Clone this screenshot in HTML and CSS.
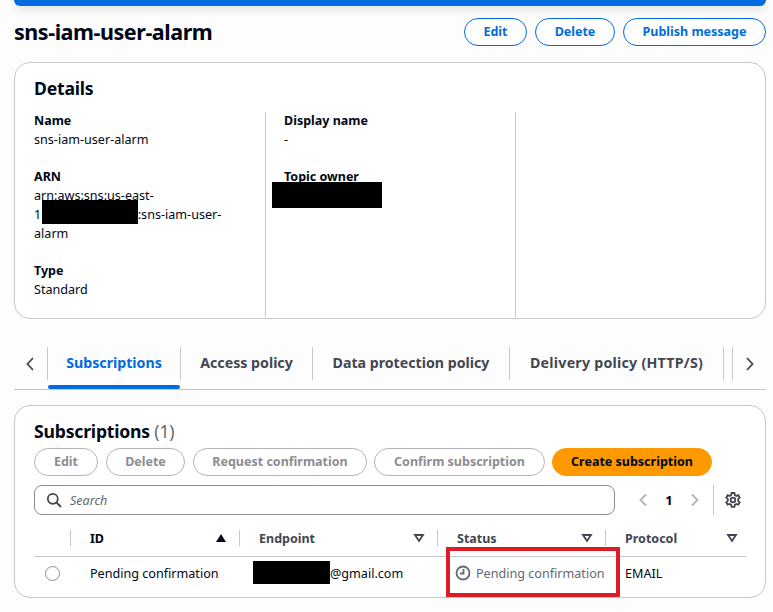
FILE: index.html
```html
<!DOCTYPE html>
<html lang="en">

<head>
  <meta charset="UTF-8">
  <meta name="viewport" content="width=device-width, initial-scale=1.0">
  <title>sns-iam-user-alarm</title>
  <link rel="stylesheet" href="styles.css">
</head>

<body>
  <div class="topbar"></div>

  <header class="page-head">
    <h1>sns-iam-user-alarm</h1>
    <div class="head-actions">
      <button class="btn btn-edit">Edit</button>
      <button class="btn btn-delete">Delete</button>
      <button class="btn btn-publish">Publish message</button>
    </div>
  </header>

  <section class="card details">
    <h2>Details</h2>
    <div class="detail-cols">
      <div class="detail-col">
        <div class="field">
          <div class="label">Name</div>
          <div class="value">sns-iam-user-alarm</div>
        </div>
        <div class="field">
          <div class="label">ARN</div>
          <div class="value arn">arn:aws:sns:us-east-<br>1<span class="gap"></span>:sns-iam-user-<br>alarm
            <div class="redact redact-arn"></div>
          </div>
        </div>
        <div class="field">
          <div class="label">Type</div>
          <div class="value">Standard</div>
        </div>
      </div>
      <div class="detail-col">
        <div class="field">
          <div class="label">Display name</div>
          <div class="value">-</div>
        </div>
        <div class="field owner">
          <div class="label">Topic owner</div>
          <div class="redact redact-owner"></div>
        </div>
      </div>
      <div class="detail-col"></div>
    </div>
  </section>

  <nav class="tabs">
    <button class="tab-arrow">
      <svg width="10" height="16" viewBox="0 0 10 16"><path d="M8 2 2.5 8 8 14" /></svg>
    </button>
    <div class="tab-list">
      <div class="tab tab-active">Subscriptions</div>
      <div class="tab tab-access">Access policy</div>
      <div class="tab tab-data">Data protection policy</div>
      <div class="tab tab-delivery">Delivery policy (HTTP/S)</div>
      <div class="tab tab-clip"></div>
    </div>
    <button class="tab-arrow">
      <svg width="10" height="16" viewBox="0 0 10 16"><path d="M2 2 7.5 8 2 14" /></svg>
    </button>
  </nav>

  <section class="card subs">
    <h2>Subscriptions <span class="count">(1)</span></h2>
    <div class="sub-actions">
      <button class="btn btn-off sub-edit">Edit</button>
      <button class="btn btn-off sub-delete">Delete</button>
      <button class="btn btn-off sub-request">Request confirmation</button>
      <button class="btn btn-off sub-confirm">Confirm subscription</button>
      <button class="btn btn-primary">Create subscription</button>
    </div>

    <div class="filter-row">
      <div class="search">
        <svg width="16" height="16" viewBox="0 0 16 16"><circle cx="6.8" cy="6.8" r="5" /><path d="M10.5 10.5 15 15" /></svg>
        <span>Search</span>
      </div>
      <div class="pager">
        <svg width="10" height="14" viewBox="0 0 10 14"><path d="M8 1.5 2.5 7 8 12.5" /></svg>
        <b>1</b>
        <svg width="10" height="14" viewBox="0 0 10 14"><path d="M2 1.5 7.5 7 2 12.5" /></svg>
      </div>
      <div class="settings">
        <svg width="16" height="16" viewBox="0 0 16 16">
          <path d="M6.6 1h2.8l.4 2 1.5.9 2-.7 1.4 2.4-1.5 1.4v1.900l1.500 1.400-1.400 2.400-2-.7-1.500.9-.4 2H6.600l-.4-2-1.500-.9-2 .7L1.300 10.300l1.500-1.400V7L1.300 5.600l1.400-2.400 2 .7 1.500-.9z" />
          <circle cx="8" cy="8" r="2.300" />
        </svg>
      </div>
    </div>

    <div class="table">
      <div class="row head">
        <div class="cell cell-radio"></div>
        <div class="cell">ID
          <svg class="sort" width="12" height="10" viewBox="0 0 12 10"><path class="solid" d="M6 1 11 9H1z" /></svg>
        </div>
        <div class="cell">Endpoint
          <svg class="sort" width="12" height="10" viewBox="0 0 12 10"><path d="M2 2h8L6 8z" /></svg>
        </div>
        <div class="cell">Status
          <svg class="sort" width="12" height="10" viewBox="0 0 12 10"><path d="M2 2h8L6 8z" /></svg>
        </div>
        <div class="cell">Protocol
          <svg class="sort" width="12" height="10" viewBox="0 0 12 10"><path d="M2 2h8L6 8z" /></svg>
        </div>
      </div>
      <div class="row body">
        <div class="cell cell-radio"><span class="radio"></span></div>
        <div class="cell">Pending confirmation</div>
        <div class="cell endpoint"><div class="redact redact-mail"></div>@gmail.com</div>
        <div class="cell pending">
          <svg width="16" height="16" viewBox="0 0 16 16"><circle cx="8" cy="8" r="6.500" /><path d="M8.500 4v4.500H5" /></svg>
          Pending confirmation
          <div class="red-box"></div>
        </div>
        <div class="cell">EMAIL</div>
      </div>
    </div>
  </section>
</body>

</html>
```

FILE: styles.css
```css
* {
  box-sizing: border-box;
}

body {
  margin: 0;
  height: 612px;
  overflow: hidden;
  padding: 0 7px 0 14px;
  background: #fdfdfd;
  color: #000716;
  font-family: "Noto Sans", "Liberation Sans", sans-serif;
  font-size: 13px;
}

svg {
  fill: none;
  stroke: currentColor;
  stroke-width: 1.800;
  flex: none;
}

.topbar {
  height: 6px;
  background: #006ce0;
  border-radius: 0 0 8px 8px;
  box-shadow: 0 3px 8px rgba(0, 7, 22, 0.15);
}

.page-head {
  height: 56px;
  display: flex;
  align-items: flex-start;
  justify-content: space-between;
  padding-top: 12px;
}

h1 {
  margin: 0;
  font-size: 21.500px;
  line-height: 28px;
  font-weight: 700;
  letter-spacing: -0.45px;
}

h2 {
  margin: 0;
  font-size: 17.600px;
  line-height: 24px;
  font-weight: 700;
  letter-spacing: -0.2px;
}

.head-actions,
.sub-actions {
  display: flex;
  gap: 8px;
}

.btn {
  height: 28px;
  padding: 0 0 2px;
  border: 1.500px solid #006ce0;
  border-radius: 14px;
  background: #fff;
  color: #006ce0;
  font-family: inherit;
  font-size: 12.500px;
  font-weight: 700;
}

.btn-edit { width: 63px; }
.btn-delete { width: 80px; }
.btn-publish { width: 143px; }

.card {
  background: #fff;
  border: 1px solid #c6c6cd;
  border-radius: 16px;
}

.details {
  height: 257px;
  padding: 13px 19px 0;
}

.detail-cols {
  display: grid;
  grid-template-columns: 231px 250px 1fr;
  margin-top: 12px;
  height: 188px;
}

.detail-col + .detail-col {
  border-left: 1px solid #c6c6cd;
  padding-left: 18px;
}

.detail-col:first-child {
  padding-right: 17px;
}

.field {
  margin-bottom: 18px;
  position: relative;
}

.field:first-child {
  margin-top: -1px;
}

.label {
  font-weight: 700;
  line-height: 19px;
  font-size: 12.500px;
}

.value {
  line-height: 19px;
  font-size: 12.600px;
}

.arn {
  position: relative;
}

.gap {
  display: inline-block;
  width: 96.500px;
}

.redact {
  position: absolute;
  background: #000;
}

.redact-arn {
  left: 8px;
  top: 14px;
  width: 96px;
  height: 24px;
}

.redact-owner {
  left: -12px;
  top: 15px;
  width: 110px;
  height: 26px;
}

.redact-mail {
  top: -4px;
  width: 77px;
  height: 23px;
}

.tabs {
  height: 71px;
  margin-bottom: 15px;
  display: flex;
  align-items: flex-start;
  padding-top: 28px;
  border-bottom: 1px solid #c6c6cd;
}

.tab-arrow {
  width: 33px;
  height: 33px;
  padding: 0 0 0 11px;
  border: 0;
  background: none;
  color: #424650;
  display: flex;
  align-items: center;
}

.tab-arrow:last-child {
  padding-left: 12px;
}

.tab-list {
  flex: 1;
  height: 33px;
  display: flex;
  border-left: 1px solid #c6c6cd;
}

.tab {
  height: 33px;
  padding-bottom: 2px;
  display: flex;
  align-items: center;
  justify-content: center;
  border-right: 1px solid #c6c6cd;
  color: #424650;
  font-size: 14.200px;
  font-weight: 700;
}

.tab-active {
  width: 133px;
  color: #006ce0;
  position: relative;
}

.tab-active::after {
  content: "";
  position: absolute;
  left: 0;
  right: 0;
  top: 38px;
  height: 4px;
  background: #006ce0;
  border-radius: 2px;
}

.tab-access { width: 132px; }
.tab-data { width: 197px; }
.tab-delivery { width: 214px; letter-spacing: 0.25px; }
.tab-clip { width: 9px; }

.subs {
  height: 193px;
  padding: 13px 19px 0;
}

.count {
  color: #656871;
  font-weight: 400;
}

.sub-actions {
  margin-top: 5px;
}

.btn-off {
  background: #fff;
  border: 1px solid #b4b4bb;
  color: #8c8c94;
}

.sub-edit { width: 64px; }
.sub-delete { width: 79px; }
.sub-request { width: 174px; }
.sub-confirm { width: 171px; margin-left: -1px; }

.btn-primary {
  width: 160px;
  margin-left: -1px;
  background: #ff9900;
  border-color: #ff9900;
  color: #000716;
}

.filter-row {
  display: flex;
  align-items: center;
  margin-top: 9px;
  height: 30px;
}

.search {
  width: 581px;
  height: 30px;
  display: flex;
  align-items: center;
  gap: 8px;
  padding-left: 11px;
  border: 1px solid #8c8c94;
  border-radius: 8px;
  color: #424650;
}

.search span {
  font-style: italic;
  color: #656871;
  font-size: 12.500px;
}

.pager {
  display: flex;
  align-items: center;
  justify-content: space-between;
  width: 62px;
  margin-left: 23px;
  color: #b4b4bb;
}

.pager b {
  color: #000716;
  font-size: 13px;
}

.settings {
  height: 30px;
  display: flex;
  align-items: center;
  margin-left: 13px;
  padding-left: 11px;
  border-left: 1px solid #c6c6cd;
  color: #424650;
}

.table {
  margin-top: 6px;
  width: 712px;
}

.row {
  display: grid;
  grid-template-columns: 36px 169px 198px 168px 141px;
}

.head {
  height: 36px;
  border-bottom: 1px solid #c6c6cd;
  font-size: 12.500px;
  font-weight: 700;
  color: #424650;
}

.head .cell {
  height: 16px;
  margin-top: 9px;
  display: flex;
  align-items: center;
  justify-content: space-between;
  padding: 0 12px 0 19px;
  border-left: 1px solid #c6c6cd;
}

.head .cell:first-child {
  border-left: 0;
}

.head .cell:last-child {
  padding-right: 8px;
}

.head .cell:nth-child(2) {
  color: #000716;
}

.sort {
  color: #424650;
}

.solid {
  fill: #000716;
  stroke: none;
}

.body {
  height: 32px;
  align-items: center;
  font-size: 12.600px;
}

.body .cell {
  padding-left: 20px;
}

.body .cell-radio {
  padding-left: 11px;
  display: flex;
}

.radio {
  width: 15px;
  height: 15px;
  border: 1px solid #8c8c94;
  border-radius: 50%;
}

.endpoint {
  position: relative;
  padding-left: 91px !important;
  white-space: nowrap;
}

.endpoint .redact {
  left: 14px;
}

.pending {
  position: relative;
  align-self: stretch;
  display: flex;
  align-items: center;
  gap: 5px;
  padding-left: 18px !important;
  color: #656871;
  white-space: nowrap;
}

.red-box {
  position: absolute;
  left: 9px;
  top: -10px;
  width: 174px;
  height: 50px;
  border: 4px solid #dd1c25;
}
```
